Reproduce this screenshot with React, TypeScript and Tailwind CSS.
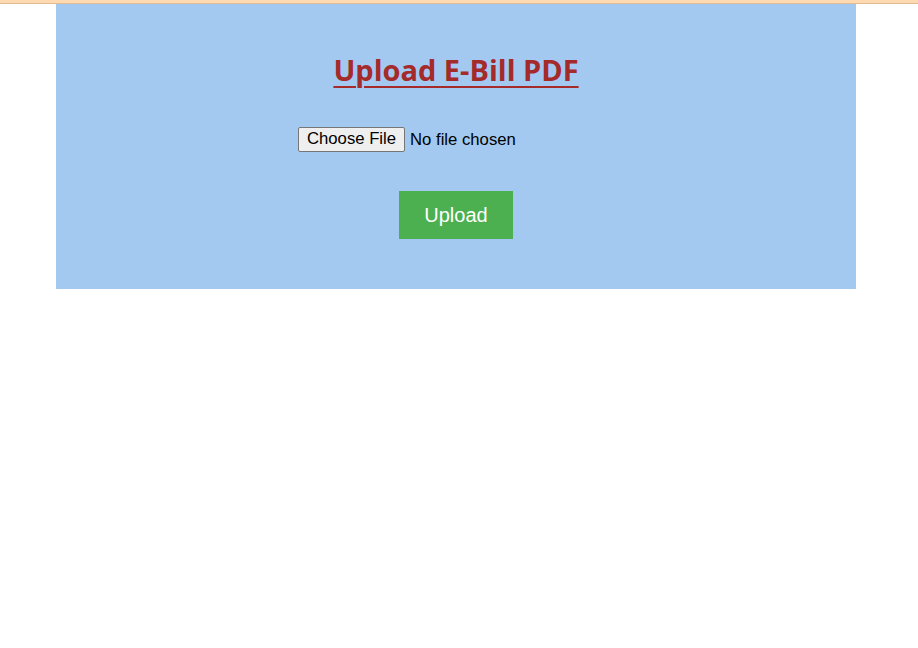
export default function App() {
  return (
    <div className="min-h-[648px] w-[918px] bg-white" style={{ fontFamily: '"Liberation Sans", Arial, sans-serif' }}>
      <div className="h-[3px] bg-[#ffd9b0]" />
      <div className="h-px bg-[#e0bc96]" />
      <div className="ml-[56px] w-[800px] h-[285px] bg-[#a3c9f1] flex flex-col items-center">
        <h1
          className="mt-[48px] text-[29px] leading-[36px] font-bold text-[#a52a2a] underline underline-offset-[5px] decoration-2"
          style={{ fontFamily: '"Open Sans", "Noto Sans", sans-serif' }}
        >
          Upload E-Bill PDF
        </h1>
        <div className="mt-[39px] w-full h-[25px] flex">
          <div className="ml-[242px] flex items-center">
            <button className="h-[25px] px-[8px] bg-[#efefef] border border-[#767676] rounded-[2px] text-[16.7px] text-black leading-none">
              Choose File
            </button>
            <span className="ml-[5px] text-[16.7px] leading-[25px] text-black">No file chosen</span>
          </div>
        </div>
        <button className="mt-[39px] w-[114px] h-[48px] bg-[#4caf50] text-white text-[20px]">Upload</button>
      </div>
    </div>
  );
}
